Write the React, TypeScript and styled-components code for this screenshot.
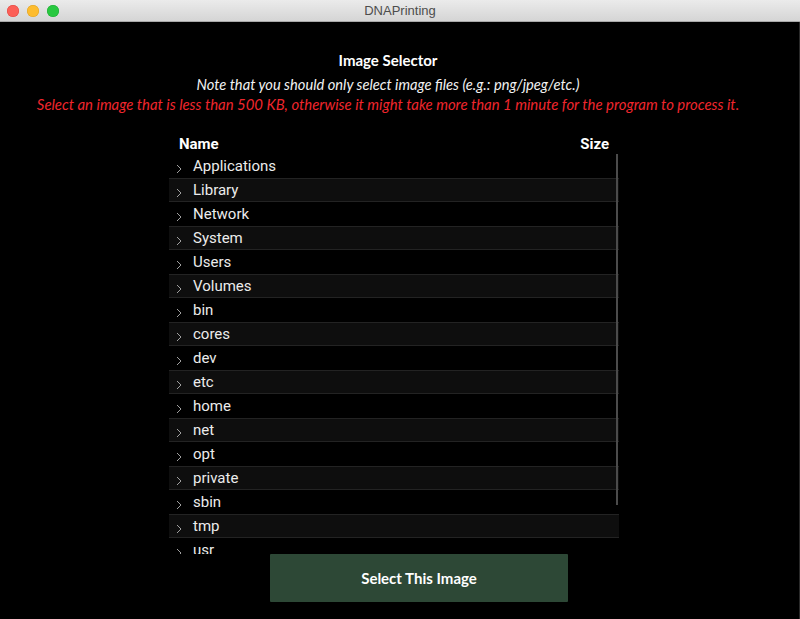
import React from 'react';
import styled, { createGlobalStyle } from 'styled-components';

const GlobalStyle = createGlobalStyle`
  html, body {
    margin: 0;
    padding: 0;
    background: #000;
    overflow: hidden;
  }
`;

const Window = styled.div`
  width: 800px;
  height: 619px;
  display: flex;
  flex-direction: column;
  background: #000;
`;

const TitleBar = styled.div`
  position: relative;
  height: 22px;
  flex: none;
  display: flex;
  align-items: center;
  justify-content: center;
  background: linear-gradient(#ebebeb, #d5d5d5);
  border-bottom: 1px solid #a9a9a9;
  box-sizing: border-box;
  font-family: 'Liberation Sans', Arial, sans-serif;
  font-size: 13px;
  color: #4d4d4d;
`;

const Lights = styled.div`
  position: absolute;
  left: 7px;
  top: 5px;
  display: flex;
  gap: 8px;
`;

const Light = styled.span<{ $color: string; $edge: string }>`
  width: 12px;
  height: 12px;
  border-radius: 50%;
  background: ${p => p.$color};
  box-shadow: inset 0 0 0 0.5px ${p => p.$edge};
`;

const Content = styled.div`
  flex: 1;
  display: flex;
  flex-direction: column;
  padding-top: 29px;
  border-right: 1px solid #2a2a2a;
`;

const Header = styled.div`
  width: 776px;
  display: flex;
  flex-direction: column;
  align-items: center;
  font-family: Lato, sans-serif;
`;

const Title = styled.h1`
  margin: 0;
  font-size: 15px;
  line-height: 18px;
  font-weight: 700;
  color: #fff;
`;

const Note = styled.p<{ $warn?: boolean }>`
  margin: ${p => (p.$warn ? '2px 0 0' : '6px 0 0')};
  font-size: ${p => (p.$warn ? '14.9px' : '14.7px')};
  line-height: 18px;
  font-style: italic;
  white-space: nowrap;
  color: ${p => (p.$warn ? '#f0262d' : '#f2f2f2')};
`;

const Table = styled.div`
  margin: 21px 0 0 169px;
  width: 450px;
  font-family: Roboto, sans-serif;
`;

const HeadRow = styled.div`
  display: flex;
  justify-content: space-between;
  padding: 0 10px;
  height: 20px;
  align-items: center;
  font-size: 15px;
  font-weight: 700;
  color: #fff;
`;

const Rows = styled.div`
  position: relative;
  height: 400px;
  overflow: hidden;
`;

const ScrollThumb = styled.div`
  position: absolute;
  right: 1px;
  top: 0;
  width: 2px;
  height: 351px;
  background: #4b4b4b;
`;

const Row = styled.div<{ $striped: boolean }>`
  height: 24px;
  box-sizing: border-box;
  display: flex;
  align-items: center;
  padding-left: 7px;
  font-size: 15px;
  color: #ececec;
  background: ${p => (p.$striped ? '#0e0e0e' : 'transparent')};
  border-top: 1px solid ${p => (p.$striped ? '#232323' : 'transparent')};
  border-bottom: 1px solid ${p => (p.$striped ? '#232323' : 'transparent')};
`;

const Chevron = styled.svg`
  width: 6px;
  height: 10px;
  margin: 6px 11px 0 0;
  flex: none;
`;

const SelectButton = styled.button`
  margin: 0 0 0 270px;
  width: 298px;
  height: 48px;
  border: none;
  border-radius: 1px;
  background: #2d4836;
  color: #fff;
  font-family: Lato, sans-serif;
  font-size: 15px;
  font-weight: 700;
  cursor: pointer;
`;

const folders = [
  'Applications', 'Library', 'Network', 'System', 'Users', 'Volumes', 'bin',
  'cores', 'dev', 'etc', 'home', 'net', 'opt', 'private', 'sbin', 'tmp', 'usr', 'var',
];

const App = () => (
  <Window>
    <GlobalStyle />
    <TitleBar>
      <Lights>
        <Light $color="#fc5f57" $edge="#de4640" />
        <Light $color="#fdbc2e" $edge="#dea123" />
        <Light $color="#28c840" $edge="#1ea933" />
      </Lights>
      DNAPrinting
    </TitleBar>
    <Content>
      <Header>
        <Title>Image Selector</Title>
        <Note>Note that you should only select image files (e.g.: png/jpeg/etc.)</Note>
        <Note $warn>
          Select an image that is less than 500 KB, otherwise it might take more than 1 minute for the program to process it.
        </Note>
      </Header>
      <Table>
        <HeadRow>
          <span>Name</span>
          <span>Size</span>
        </HeadRow>
        <Rows>
          {folders.map((name, i) => (
            <Row key={name} $striped={i % 2 === 1}>
              <Chevron viewBox="0 0 6 10">
                <polyline points="1,1 5,5 1,9" fill="none" stroke="#a0a0a0" strokeWidth="1" />
              </Chevron>
              {name}
            </Row>
          ))}
          <ScrollThumb />
        </Rows>
      </Table>
      <SelectButton>Select This Image</SelectButton>
    </Content>
  </Window>
);

export default App;
